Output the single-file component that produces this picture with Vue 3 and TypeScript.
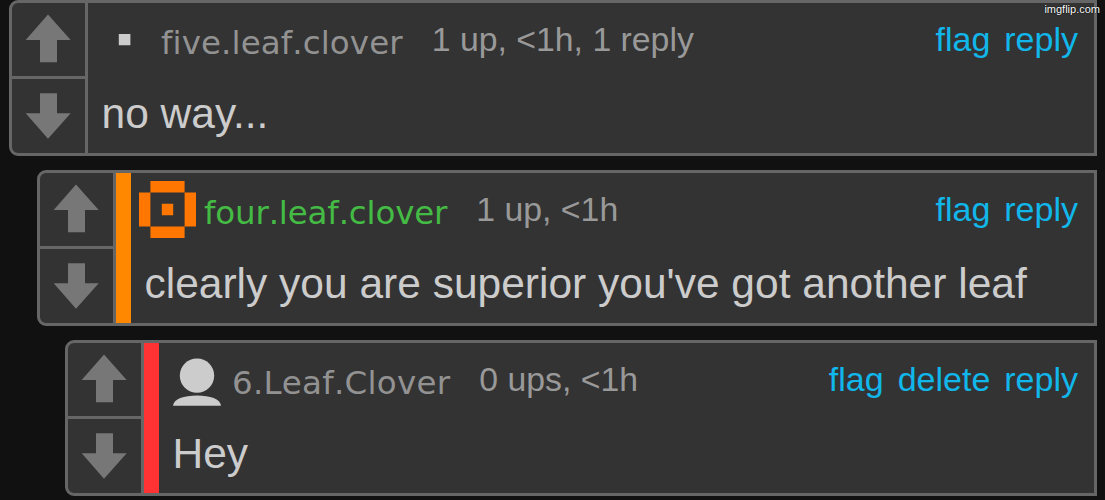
<script setup lang="ts">
import { ref } from "vue";

interface Comment {
  id: number,
  user: string,
  icon: "dot" | "ring" | "person",
  color: string,
  stats: string,
  text: string,
  actions: string[],
}

const comments = ref<Comment[]>([
  {
    id: 1,
    user: "five.leaf.clover",
    icon: "dot",
    color: "gray",
    stats: "1 up, <1h, 1 reply",
    text: "no way...",
    actions: ["flag", "reply"],
  },
  {
    id: 2,
    user: "four.leaf.clover",
    icon: "ring",
    color: "green",
    stats: "1 up, <1h",
    text: "clearly you are superior you've got another leaf",
    actions: ["flag", "reply"],
  },
  {
    id: 3,
    user: "6.Leaf.Clover",
    icon: "person",
    color: "gray",
    stats: "0 ups, <1h",
    text: "Hey",
    actions: ["flag", "delete", "reply"],
  },
]);
</script>

<template>
  <main class="thread">
    <article
      v-for="(comment, level) in comments"
      :key="comment.id"
      class="comment"
      :class="`level-${level}`">
      <div class="votes">
        <button class="vote" aria-label="Upvote">
          <svg width="73" height="73" viewBox="0 0 73 73">
            <path d="M36 11.5L58.7 37H45V59.2H28V37H13.7Z" />
          </svg>
        </button>
        <button class="vote" aria-label="Downvote">
          <svg width="73" height="74" viewBox="0 0 73 74">
            <path d="M28 14.3H45V34.2H58.7L36 59.8L13.7 34.2H28Z" />
          </svg>
        </button>
      </div>
      <div v-if="level > 0" class="stripe"></div>
      <div class="content">
        <header class="head">
          <svg
            v-if="comment.icon === 'dot'"
            class="icon icon-dot"
            width="57"
            height="57"
            viewBox="0 0 57 57">
            <path d="M22.8 23H34.4V34.3H22.8Z" />
          </svg>
          <svg
            v-else-if="comment.icon === 'ring'"
            class="icon icon-ring"
            width="57"
            height="57"
            viewBox="0 0 57 57">
            <path d="M11.4 0H45.6V11.4H11.4ZM0 11.4H11.4V45.6H0ZM45.6 11.4H57V45.6H45.6ZM11.4 45.6H45.6V57H11.4ZM22.8 22.8H34.2V34.2H22.8Z" />
          </svg>
          <svg
            v-else
            class="icon icon-person"
            width="49"
            height="48"
            viewBox="0 0 49 48">
            <circle cx="24" cy="17.6" r="17.2" />
            <path d="M0 47.8C0.5 41 11 37.5 24 37.5S47.5 41 48 47.8Z" />
          </svg>
          <a class="user" :class="comment.color">{{ comment.user }}</a>
          <span class="stats">{{ comment.stats }}</span>
          <nav class="actions">
            <a v-for="action in comment.actions" :key="action">{{ action }}</a>
          </nav>
        </header>
        <p class="text">{{ comment.text }}</p>
      </div>
    </article>
    <div class="watermark">imgflip.com</div>
  </main>
</template>

<style>
body {
  margin: 0;
  background: #111;
}
</style>

<style scoped>
.thread {
  position: relative;
  display: flex;
  flex-direction: column;
  gap: 14px;
  width: 1105px;
  height: 500px;
  padding: 0 8px 0 9px;
  box-sizing: border-box;
  overflow: hidden;
  background: #111;
  font-family: "Liberation Sans", Arial, sans-serif;
}

.comment {
  display: flex;
  flex: none;
  height: 156px;
  box-sizing: border-box;
  border: 3px solid #666;
  border-radius: 9px 0 0 9px;
  background: #333;
  overflow: hidden;
}

.level-1 {
  margin-left: 28px;
}

.level-2 {
  margin-left: 56px;
}

.votes {
  flex: none;
  width: 73px;
  border-right: 3px solid #666;
}

.vote {
  display: block;
  width: 73px;
  height: 74px;
  padding: 0;
  border: none;
  background: none;
  cursor: pointer;
}

.vote:first-child {
  height: 76px;
  border-bottom: 3px solid #666;
}

.vote svg {
  display: block;
  fill: #777;
}

.stripe {
  flex: none;
  width: 15px;
  background: #ff8800;
}

.level-2 .stripe {
  background: #ff3333;
}

.content {
  flex: 1;
  min-width: 0;
}

.head {
  display: flex;
  height: 74px;
  padding-right: 16px;
  font-size: 34px;
  line-height: 72px;
  white-space: nowrap;
}

.icon {
  flex: none;
  margin: 8px 8px 0 8px;
  fill: #ccc;
}

.icon-ring {
  fill: #ff7700;
}

.icon-person {
  margin: 15px 10px 0 14px;
}

.user {
  font-family: "DejaVu Sans", Verdana, sans-serif;
  font-size: 32.5px;
  font-kerning: none;
  font-variant-ligatures: none;
  line-height: 80px;
  letter-spacing: .1px;
}

.level-1 .user {
  letter-spacing: -.15px;
}

.level-2 .user {
  letter-spacing: .25px;
}

.gray {
  color: #929292;
}

.green {
  color: #44bb44;
}

.stats {
  margin-left: 29px;
  color: #999;
  font-size: 33.8px;
}

.actions {
  display: flex;
  gap: 14px;
  margin-left: auto;
  color: #11b7ea;
}

.text {
  margin: 0 0 0 13.5px;
  color: #ccc;
  font-size: 42.5px;
  line-height: 74px;
  white-space: nowrap;
}

.watermark {
  position: absolute;
  top: 2px;
  right: 5px;
  color: #fff;
  font-size: 11px;
  line-height: 14px;
  text-shadow: 0 0 1px #000, 0 0 1px #000;
}
</style>
